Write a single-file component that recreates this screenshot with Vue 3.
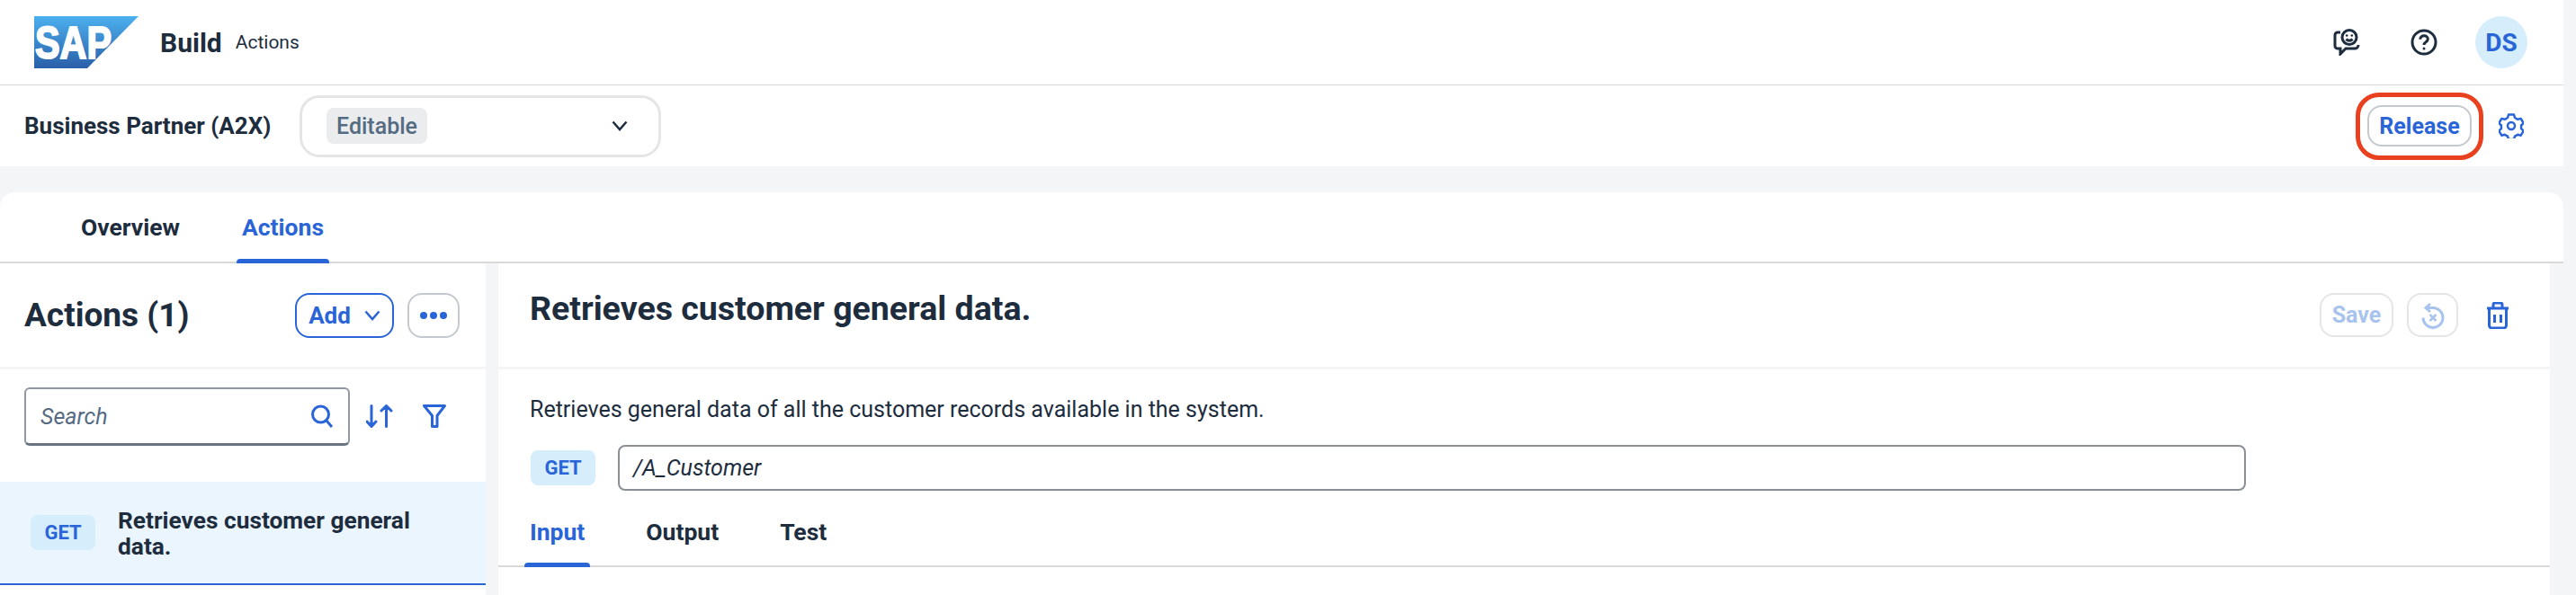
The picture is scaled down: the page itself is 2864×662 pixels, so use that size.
<template>
  <div class="page">
    <header class="shell">
      <div class="brand">
        <svg class="logo" viewBox="0 0 116 58" width="116" height="58">
          <defs>
            <linearGradient id="sapGrad" x1="0" y1="0" x2="0" y2="1">
              <stop offset="0" stop-color="#4cb0ee" />
              <stop offset="1" stop-color="#2a5fa9" />
            </linearGradient>
          </defs>
          <polygon points="0,0 116,0 59,58 0,58" fill="url(#sapGrad)" />
          <text x="1" y="47" class="logo-text" textLength="85" lengthAdjust="spacingAndGlyphs">SAP</text>
        </svg>
        <span class="brand-name">Build</span>
        <span class="brand-sub">Actions</span>
      </div>
      <div class="shell-actions">
        <svg class="shell-icon feedback" viewBox="0 0 30 30" width="30" height="30" fill="none">
          <path d="M8 4H5a3 3 0 0 0-3 3v12a3 3 0 0 0 3 3h3v6l6-6h10a4 4 0 0 0 4-4" />
          <circle cx="18" cy="9.500" r="8" />
          <path d="M14.500 11.500c1.800 2.200 5.200 2.200 7 0" />
          <circle class="eye" cx="15.200" cy="7.500" r="1.300" />
          <circle class="eye" cx="20.800" cy="7.500" r="1.300" />
        </svg>
        <svg class="shell-icon help" viewBox="0 0 30 30" width="30" height="30" fill="none">
          <circle cx="15" cy="15" r="13" />
          <path d="M10.800 11.800c0-2.500 1.900-4 4.300-4s4.200 1.500 4.200 3.700c0 3.300-4.300 3.200-4.300 6.500" />
          <circle class="eye" cx="15" cy="22" r="1.500" />
        </svg>
        <div class="avatar">DS</div>
      </div>
    </header>

    <div class="subheader">
      <div class="sub-left">
        <span class="api-name">Business Partner (A2X)</span>
        <div class="status-select">
          <span class="status-tag">Editable</span>
          <svg class="chevron" viewBox="0 0 18 12" width="18" height="12" fill="none">
            <path d="M1.500 1.500 9 10l7.500-8.500" />
          </svg>
        </div>
      </div>
      <div class="sub-right">
        <div class="release-ring">
          <button class="btn release">Release</button>
        </div>
        <svg class="gear" viewBox="0 0 28 28" width="28" height="28" fill="none">
          <path d="M11 2h6l1 3.500 3.200 1.800 3.500-.9 3 5.100-2.600 2.500v3.600l2.600 2.500-3 5.100-3.500-.9-3.200 1.800-1 3.400h-6l-1-3.400-3.200-1.800-3.500.9-3-5.100 2.600-2.500v-3.600L.3 11.500l3-5.100 3.500.9L10 5.500z" transform="translate(0 -.5)" />
          <circle cx="14" cy="14" r="4" />
        </svg>
      </div>
    </div>

    <div class="tabs-card">
      <nav class="tabs">
        <a class="tab">Overview</a>
        <a class="tab active">Actions</a>
      </nav>
    </div>

    <main class="content">
      <aside class="side">
        <div class="side-head">
          <h2>Actions (1)</h2>
          <div class="side-btns">
            <button class="btn add">
              Add
              <svg viewBox="0 0 18 12" width="18" height="12" fill="none">
                <path d="M1.500 1.500 9 10l7.500-8.500" />
              </svg>
            </button>
            <button class="btn more">
              <i></i><i></i><i></i>
            </button>
          </div>
        </div>
        <div class="side-search">
          <div class="search">
            <span>Search</span>
            <svg viewBox="0 0 26 26" width="26" height="26" fill="none">
              <circle cx="11.500" cy="11" r="9" />
              <path d="M18 18l6 7" />
            </svg>
          </div>
          <svg class="tool" viewBox="0 0 30 26" width="30" height="26" fill="none">
            <path d="M6 1.500v23M1 19l5 5.500 5-5.500M22.500 24.500v-23M17 7l5.500-5.500L28 7" />
          </svg>
          <svg class="tool filter" viewBox="0 0 26 26" width="26" height="26" fill="none">
            <path d="M1.500 1.500h23L16 12.500v12h-5.500v-12z" />
          </svg>
        </div>
        <div class="list-item">
          <span class="verb">GET</span>
          <span class="item-title">Retrieves customer general data.</span>
        </div>
      </aside>

      <section class="detail">
        <div class="detail-head">
          <h2>Retrieves customer general data.</h2>
          <div class="detail-btns">
            <button class="btn save">Save</button>
            <button class="btn undo">
              <svg viewBox="0 0 28 30" width="28" height="30" fill="none">
                <path d="M6 6.500h8A11 11 0 1 1 3 17.500" />
                <path d="M11 2 6 6.500l5 4.500" />
                <path class="undo-x" d="M10.500 14l7 7M17.500 14l-7 7" />
              </svg>
            </button>
            <svg class="trash" viewBox="0 0 26 30" width="26" height="30" fill="none">
              <path d="M1 7h24M8 7V3a2 2 0 0 1 2-2h6a2 2 0 0 1 2 2v4" />
              <path d="M3.500 7v19a3 3 0 0 0 3 3h13a3 3 0 0 0 3-3V7" />
              <path d="M9.500 14v9M16.500 14v9" />
            </svg>
          </div>
        </div>
        <div class="detail-body">
          <p class="desc">Retrieves general data of all the customer records available in the system.</p>
          <div class="path-row">
            <span class="verb">GET</span>
            <div class="path-input">/A_Customer</div>
          </div>
          <nav class="sub-tabs">
            <a class="sub-tab active">Input</a>
            <a class="sub-tab">Output</a>
            <a class="sub-tab">Test</a>
          </nav>
        </div>
      </section>
    </main>
  </div>
</template>

<script setup>
</script>

<style>
html, body {
  margin: 0;
  background: #f4f5f7;
}
</style>

<style scoped>
.page {
  width: 2864px;
  height: 662px;
  overflow: hidden;
  font-family: Roboto, "Noto Sans", sans-serif;
  color: #1d2d3e;
  background: #f4f5f7;
}

.shell {
  width: 2850px;
  height: 94px;
  background: #fff;
  border-bottom: 2px solid #d9d9d9;
  display: flex;
  align-items: center;
  justify-content: space-between;
  margin-bottom: -1px;
}

.brand {
  display: flex;
  align-items: center;
  padding-left: 38px;
}

.logo-text {
  font-family: "Liberation Sans", sans-serif;
  font-weight: 700;
  font-size: 50px;
  fill: #fff;
  stroke: #fff;
  stroke-width: 2px;
}

.brand-name {
  margin-left: 24px;
  font-size: 30px;
  font-weight: 700;
}

.brand-sub {
  margin-left: 15px;
  font-size: 21px;
}

.shell-actions {
  display: flex;
  align-items: center;
  padding-right: 40px;
}

.shell-icon {
  stroke: #1d2d3e;
  stroke-width: 3;
}

.shell-icon .eye {
  fill: #1d2d3e;
  stroke: none;
}

.help {
  margin-left: 56px;
}

.avatar {
  width: 58px;
  height: 58px;
  margin-left: 42px;
  border-radius: 50%;
  background: #d6edfc;
  color: #2a65d8;
  display: flex;
  align-items: center;
  justify-content: center;
  font-size: 28px;
  font-weight: 700;
}

.subheader {
  width: 2850px;
  height: 90px;
  background: #fff;
  display: flex;
  align-items: center;
  justify-content: space-between;
}

.sub-left {
  display: flex;
  align-items: center;
  padding-left: 27px;
}

.api-name {
  font-size: 26px;
  font-weight: 700;
  width: 306px;
  white-space: nowrap;
}

.status-select {
  width: 402px;
  height: 69px;
  box-sizing: border-box;
  border: 3px solid #e5e5e5;
  border-radius: 22px;
  padding: 0 34px 0 27px;
  display: flex;
  align-items: center;
  justify-content: space-between;
}

.status-tag {
  height: 40px;
  padding: 0 11px;
  border-radius: 8px;
  background: #eaecee;
  color: #556b82;
  font-size: 25px;
  font-weight: 500;
  display: flex;
  align-items: center;
}

.chevron {
  stroke: #1d2d3e;
  stroke-width: 2.500;
}

.sub-right {
  display: flex;
  align-items: center;
  padding-right: 44px;
}

.release-ring {
  width: 142px;
  height: 75px;
  box-sizing: border-box;
  border: 5px solid #e9401f;
  border-radius: 26px;
  display: flex;
  align-items: center;
  justify-content: center;
}

.gear {
  margin-left: 17px;
  stroke: #2a65d8;
  stroke-width: 2.500;
  stroke-linejoin: round;
}

.btn {
  font-family: inherit;
  background: #fff;
  border: 2px solid #c4c9cf;
  border-radius: 16px;
  color: #2a65d8;
  font-weight: 700;
  box-sizing: border-box;
  padding: 0;
  display: flex;
  align-items: center;
  justify-content: center;
}

.release {
  width: 116px;
  height: 46px;
  font-size: 25px;
}

.tabs-card {
  width: 2850px;
  height: 77px;
  margin-top: 29px;
  background: #fff;
  border-radius: 16px 16px 0 0;
  border-bottom: 2px solid #d9d9d9;
}

.tabs {
  display: flex;
  height: 77px;
  padding-left: 84px;
  gap: 57px;
}

.tab {
  position: relative;
  padding: 0 6px;
  display: flex;
  align-items: center;
  font-size: 26.500px;
  font-weight: 700;
  color: #1d2d3e;
}

.tab.active,
.sub-tab.active {
  color: #2a65d8;
}

.tab.active::after,
.sub-tab.active::after {
  content: "";
  position: absolute;
  left: 0;
  right: 0;
  bottom: -2px;
  height: 5px;
  border-radius: 4px 4px 0 0;
  background: #2a65d8;
}

.content {
  display: flex;
  height: 369px;
}

.side {
  width: 540px;
  background: #fff;
  flex: none;
}

.side-head,
.detail-head {
  height: 115px;
  border-bottom: 3px solid #f4f5f7;
  display: flex;
  justify-content: space-between;
}

.side-head {
  padding: 0 29px 0 27px;
  align-items: center;
}

h2 {
  margin: 0;
  font-weight: 700;
}

.side-head h2 {
  font-size: 37px;
}

.side-btns,
.detail-btns {
  display: flex;
  align-items: center;
}

.add {
  width: 110px;
  height: 50px;
  border-color: #2a65d8;
  font-size: 26px;
  gap: 15px;
}

.add svg {
  stroke: #2a65d8;
  stroke-width: 2.500;
}

.more {
  width: 58px;
  height: 50px;
  margin-left: 15px;
  gap: 3px;
}

.more i {
  width: 8px;
  height: 8px;
  border-radius: 50%;
  background: #2a65d8;
}

.side-search {
  height: 125px;
  padding-left: 27px;
  display: flex;
  align-items: flex-start;
}

.search {
  width: 362px;
  height: 65px;
  margin-top: 20px;
  box-sizing: border-box;
  border: 2px solid #8e97a3;
  border-bottom: 3px solid #6a7480;
  border-radius: 6px;
  padding: 0 16px;
  display: flex;
  align-items: center;
  justify-content: space-between;
  font-size: 25px;
  font-style: italic;
  color: #556b82;
}

.search svg {
  stroke: #2a65d8;
  stroke-width: 3;
}

.tool {
  margin-top: 39px;
  margin-left: 18px;
  stroke: #2a65d8;
  stroke-width: 3;
  stroke-linecap: round;
  stroke-linejoin: round;
}

.tool.filter {
  margin-left: 33px;
}

.list-item {
  height: 115px;
  box-sizing: border-box;
  border-bottom: 2px solid #2a65d8;
  background: #ebf5fe;
  padding-left: 34px;
  display: flex;
  align-items: center;
  gap: 25px;
}

.verb {
  width: 72px;
  height: 39px;
  flex: none;
  border-radius: 8px;
  background: #d6edfc;
  color: #2a65d8;
  font-size: 22px;
  font-weight: 700;
  display: flex;
  align-items: center;
  justify-content: center;
}

.item-title {
  width: 370px;
  margin-top: 3px;
  font-size: 26.300px;
  font-weight: 700;
  line-height: 29px;
}

.detail {
  width: 2281px;
  margin-left: 14px;
  background: #fff;
}

.detail-head {
  padding: 0 26px 0 35px;
}

.detail-head h2 {
  font-size: 37.500px;
  margin-top: 28px;
}

.detail-btns {
  height: 49px;
  margin-top: 33px;
}

.save {
  width: 82px;
  height: 49px;
  border-color: #e5e5e5;
  color: #a9c3ef;
  font-size: 25px;
}

.undo {
  width: 57px;
  height: 49px;
  margin-left: 15px;
  border-color: #e5e5e5;
}

.undo svg {
  stroke: #a9c3ef;
  stroke-width: 3;
}

.undo .undo-x {
  stroke-width: 2.500;
}

.trash {
  margin-left: 31px;
  margin-right: 19px;
  stroke: #2a65d8;
  stroke-width: 3;
}

.desc {
  margin: 0;
  padding: 30px 0 0 35px;
  font-size: 25px;
  line-height: 30px;
}

.path-row {
  display: flex;
  align-items: center;
  padding: 24px 0 0 36px;
  gap: 25px;
}

.path-input {
  width: 1810px;
  height: 51px;
  box-sizing: border-box;
  border: 2px solid #8a8f96;
  border-radius: 8px;
  padding-left: 15px;
  display: flex;
  align-items: center;
  font-size: 25px;
  font-style: italic;
}

.sub-tabs {
  display: flex;
  height: 85px;
  padding-left: 29px;
  gap: 56px;
  border-bottom: 2px solid #d9d9d9;
  box-sizing: border-box;
}

.sub-tab {
  position: relative;
  padding: 8px 6px 0;
  display: flex;
  align-items: center;
  font-size: 26.500px;
  font-weight: 700;
}
</style>
